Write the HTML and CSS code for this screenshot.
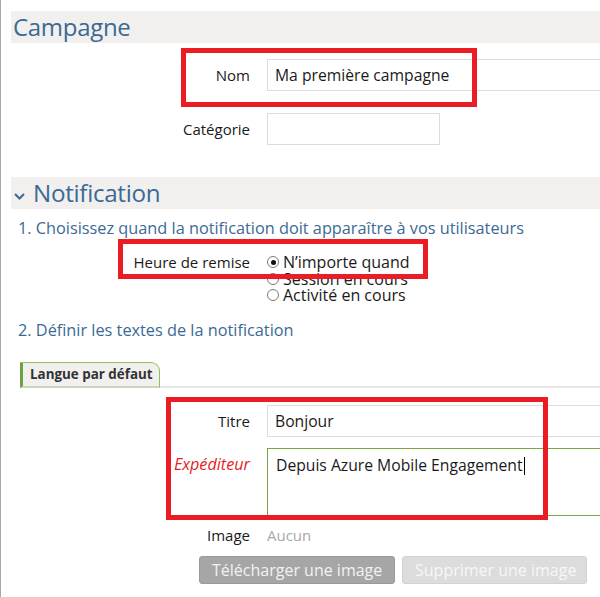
FILE: index.html
```html
<!DOCTYPE html>
<html lang="fr">
<head>
<meta charset="utf-8">
<title>Campagne</title>
<link rel="stylesheet" href="styles.css">
</head>
<body>
<div class="page">
  <div class="head head-campagne"><span class="head-text">Campagne</span></div>

  <div class="row row-nom">
    <label class="lbl">Nom</label>
    <div class="input input-wide">Ma première campagne</div>
  </div>

  <div class="row row-cat">
    <label class="lbl">Catégorie</label>
    <div class="input input-short"></div>
  </div>

  <div class="head head-notif">
    <svg class="chev" width="11" height="7" viewBox="0 0 11 7"><path d="M1 1 L5.5 5.5 L10 1" fill="none" stroke="#3b6a94" stroke-width="2"/></svg>
    <span class="head-text">Notification</span>
  </div>

  <p class="step step1">1. Choisissez quand la notification doit apparaître à vos utilisateurs</p>

  <div class="row row-radio">
    <label class="lbl lbl-radio">Heure de remise</label>
    <div class="radios">
      <div class="radio"><span class="dot checked"></span>N’importe quand</div>
      <div class="radio"><span class="dot"></span>Session en cours</div>
      <div class="radio"><span class="dot"></span>Activité en cours</div>
    </div>
  </div>

  <p class="step step2">2. Définir les textes de la notification</p>

  <div class="tabs">
    <div class="tab">Langue par défaut</div>
  </div>

  <div class="row row-titre">
    <label class="lbl">Titre</label>
    <div class="input input-wide">Bonjour</div>
  </div>

  <div class="row row-exp">
    <label class="lbl lbl-exp">Expéditeur</label>
    <div class="textarea">Depuis Azure Mobile Engagement<span class="caret"></span></div>
  </div>

  <div class="row row-img">
    <label class="lbl">Image</label>
    <span class="none">Aucun</span>
  </div>

  <div class="buttons">
    <div class="btn btn-up">Télécharger une image</div>
    <div class="btn btn-del">Supprimer une image</div>
  </div>

  <div class="mark mark-nom"></div>
  <div class="mark mark-radio"></div>
  <div class="mark mark-text"></div>
</div>
</body>
</html>
```

FILE: styles.css
```css
* { box-sizing: border-box; }
html, body { margin: 0; padding: 0; background: #fff; }
body {
  font-family: "Open Sans", "Noto Sans", sans-serif;
  font-size: 15px;
  color: #1a1a1a;
  overflow: hidden;
}
.page {
  position: relative;
  width: 600px;
  height: 597px;
  border-left: 1px solid #a8a8a8;
  padding-top: 11px;
  overflow: hidden;
}
.head {
  margin-left: 10px;
  height: 32px;
  background: #f1f0ef;
  display: flex;
  align-items: center;
  color: #3b6a94;
}
.head-text {
  font-size: 24px;
  line-height: 32px;
  letter-spacing: -0.3px;
}
.head-campagne .head-text { padding-left: 2px; }
.head-notif { margin-top: 32px; }
.head-notif .head-text { font-size: 24.2px; padding-left: 8px; }
.chev { margin-left: 3px; margin-top: 6px; }

.row { display: flex; align-items: center; }
.lbl {
  width: 249px;
  text-align: right;
  flex: none;
  margin-right: 17px;
  line-height: 20px;
}
.input {
  height: 32px;
  border: 1px solid #dcdcdc;
  padding: 0 7px;
  line-height: 30px;
  font-size: 15.7px;
  white-space: nowrap;
}
.input-wide { width: 360px; flex: none; }
.input-short { width: 173px; }
.row-nom { margin-top: 16px; }
.row-cat { margin-top: 22px; }

.step {
  margin: 0;
  padding-left: 17px;
  font-size: 16.3px;
  line-height: 22px;
  color: #3b6a94;
  white-space: nowrap;
}
.step1 { margin-top: 8px; }
.step2 { margin-top: 15px; }

.row-radio { margin-top: 15px; align-items: flex-start; }
.lbl-radio { line-height: 17px; padding-top: 0; }
.radios { display: flex; flex-direction: column; font-size: 16px; }
.radio {
  display: flex;
  align-items: center;
  height: 16.5px;
  line-height: 16.5px;
  white-space: nowrap;
}
.dot {
  width: 12px;
  height: 12px;
  border: 1px solid #7a7a7a;
  border-radius: 50%;
  margin-right: 4px;
  position: relative;
  flex: none;
  background: #fff;
}
.dot.checked::after {
  content: "";
  position: absolute;
  left: 2.5px;
  top: 2.5px;
  width: 5px;
  height: 5px;
  border-radius: 50%;
  background: #111;
}

.tabs {
  margin-top: 19px;
  margin-left: 19px;
  height: 28px;
  border-bottom: 2px solid #e8e8e8;
  display: flex;
  align-items: flex-end;
}
.tab {
  height: 26px;
  margin-bottom: -2px;
  padding: 0 6px 0 7px;
  background: #f1f0ef;
  border-left: 3px solid #6ba43a;
  border-top: 1px solid #8ec05e;
  border-right: 1px solid #8ec05e;
  border-bottom: 2px solid #c9d6bb;
  border-top-right-radius: 9px;
  font-weight: bold;
  font-size: 13.4px;
  line-height: 23px;
  color: #333;
}

.row-titre { margin-top: 17px; }
.row-exp { margin-top: 11px; align-items: flex-start; }
.lbl-exp {
  color: #e21f26;
  font-style: italic;
  font-size: 16.2px;
  padding-top: 6px;
}
.textarea {
  width: 360px;
  flex: none;
  height: 68px;
  border: 1px solid #79a843;
  padding: 5px 8px;
  line-height: 22px;
  font-size: 15.7px;
  white-space: nowrap;
}
.caret {
  display: inline-block;
  width: 1px;
  height: 18px;
  background: #000;
  vertical-align: -4px;
  margin-left: 1px;
}

.row-img { margin-top: 9px; }
.none { color: #a9a9a9; line-height: 20px; }

.buttons {
  display: flex;
  margin-top: 11px;
  margin-left: 198px;
  gap: 7px;
}
.btn {
  height: 28px;
  border-radius: 3px;
  padding: 0 12px;
  font-size: 16px;
  line-height: 26px;
  white-space: nowrap;
}
.btn-up {
  width: 196px;
  background: #a6a6a6;
  border: 1px solid #9a9a9a;
  color: #f2f2f2;
}
.btn-del {
  width: 185px;
  background: #dcdcdc;
  border: 1px solid #d2d2d2;
  color: #f7f7f7;
}

.mark {
  position: absolute;
  border: 5px solid #ec1c24;
  pointer-events: none;
}
.mark-nom { left: 180px; top: 48px; width: 296px; height: 59px; }
.mark-radio { left: 117px; top: 239px; width: 310px; height: 40px; }
.mark-text { left: 165px; top: 397px; width: 382px; height: 123px; }
```
